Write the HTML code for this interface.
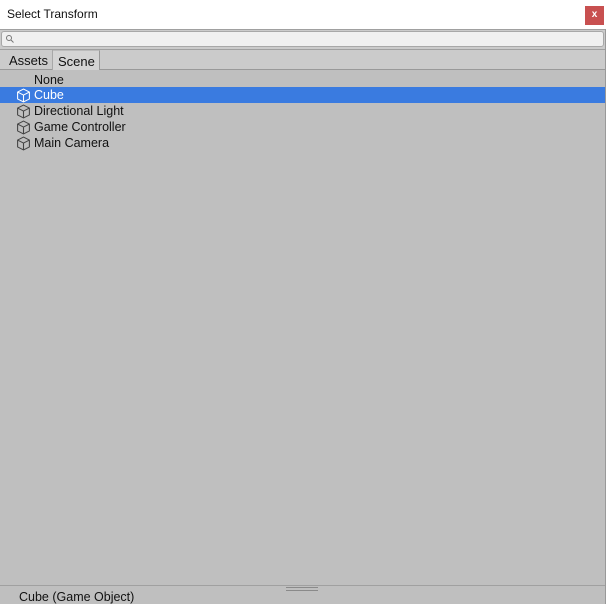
<!DOCTYPE html>
<html><head><style>
*{margin:0;padding:0;box-sizing:border-box}
body{width:606px;height:604px;overflow:hidden;background:#bfbfbf;font-family:"Liberation Sans",Arial,sans-serif;font-size:12px;color:#111;position:relative}
.title{position:absolute;left:0;top:0;width:606px;height:29px;background:#fff}
.title span{position:absolute;left:7px;top:7px;font-size:12px;color:#111}
.close{position:absolute;left:585px;top:6px;width:19px;height:19px;background:#c85050;color:#fff;font-size:10px;font-weight:bold;text-align:center;line-height:18px}
.band{position:absolute;left:0;top:29px;width:606px;height:41px;background:#cbcbcb;border-top:1px solid #a0a0a0;border-bottom:1px solid #999}
.search{position:absolute;left:1px;top:31px;width:603px;height:16px;background:#f0f0f0;border:1px solid #a8a8a8;border-radius:3px}
.sep{position:absolute;left:0;top:49px;width:606px;height:1px;background:#a0a0a0}
.tab{position:absolute;top:50px;height:20px;line-height:21px;font-size:13px;color:#111}
.t1{left:0;width:53px;padding-left:9px;border-right:1px solid #a8a8a8}
.t2{left:53px;width:47px;padding-left:5px;background:#d4d4d4;border-right:1px solid #999;border-top:1px solid #bbb}
.row{position:absolute;left:0;width:606px;height:16px;line-height:16px;font-size:12.5px}
.row span{position:absolute;left:34px}
.row svg{position:absolute;left:16px;top:1px}
.sel{background:#3a7be0;color:#fff}
.bottom{position:absolute;left:0;top:585px;width:606px;height:1px;background:#a0a0a0}
.grip{position:absolute;left:286px;width:32px;height:1px;background:#8a8a8a}
.status{position:absolute;left:19px;top:590px;font-size:12.5px}
.redge{position:absolute;left:605px;top:29px;width:1px;height:575px;background:#999}
</style></head><body>
<div class="title"><span>Select Transform</span><div class="close">x</div></div>
<div class="band"></div>
<div class="search"><svg width="10" height="10" style="position:absolute;left:3px;top:2px"><circle cx="4" cy="4" r="2.5" fill="none" stroke="#777" stroke-width="1"/><line x1="6" y1="6" x2="8.5" y2="8.5" stroke="#777"/></svg></div>
<div class="sep"></div>
<div class="tab t1">Assets</div>
<div class="tab t2">Scene</div>
<div class="row" style="top:72px"><span>None</span></div>
<div class="row sel" style="top:87px"><svg width="15" height="15" viewBox="0 0 14 14"><path d="M7 1L12.5 3.8V10.2L7 13L1.5 10.2V3.8Z M1.5 3.8L7 6.6L12.5 3.8 M7 6.6V13" fill="none" stroke="#fff" stroke-width="1" stroke-linejoin="round"/></svg><span>Cube</span></div>
<div class="row" style="top:103px"><svg width="15" height="15" viewBox="0 0 14 14"><path d="M7 1L12.5 3.8V10.2L7 13L1.5 10.2V3.8Z M1.5 3.8L7 6.6L12.5 3.8 M7 6.6V13" fill="none" stroke="#444" stroke-width="1" stroke-linejoin="round"/></svg><span>Directional Light</span></div>
<div class="row" style="top:119px"><svg width="15" height="15" viewBox="0 0 14 14"><path d="M7 1L12.5 3.8V10.2L7 13L1.5 10.2V3.8Z M1.5 3.8L7 6.6L12.5 3.8 M7 6.6V13" fill="none" stroke="#444" stroke-width="1" stroke-linejoin="round"/></svg><span>Game Controller</span></div>
<div class="row" style="top:135px"><svg width="15" height="15" viewBox="0 0 14 14"><path d="M7 1L12.5 3.8V10.2L7 13L1.5 10.2V3.8Z M1.5 3.8L7 6.6L12.5 3.8 M7 6.6V13" fill="none" stroke="#444" stroke-width="1" stroke-linejoin="round"/></svg><span>Main Camera</span></div>
<div class="bottom"></div>
<div class="grip" style="top:587px"></div>
<div class="grip" style="top:590px"></div>
<div class="status">Cube (Game Object)</div>
<div class="redge"></div>
</body></html>
